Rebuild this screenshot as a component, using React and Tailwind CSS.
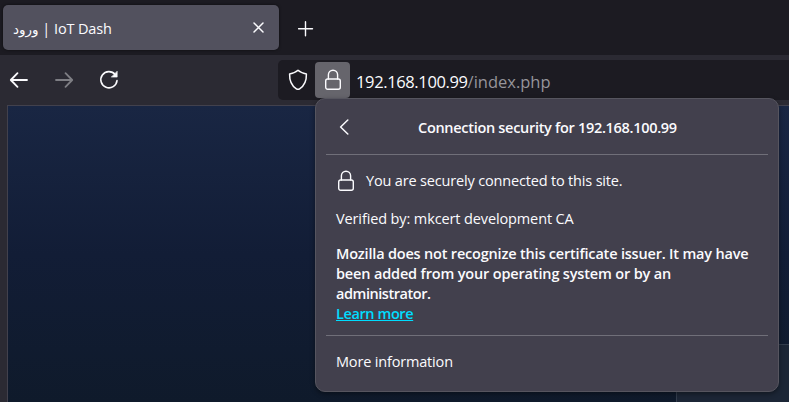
const stroke = {
  fill: 'none',
  stroke: 'currentColor',
  strokeLinecap: 'round',
  strokeLinejoin: 'round',
};

function Lock({ className }) {
  return (
    <svg className={className} width="18" height="22" viewBox="0 0 18 22" {...stroke} strokeWidth="1.4">
      <rect x="1.7" y="10" width="14.6" height="10.3" rx="2" />
      <path d="M4.4 10V5.8a4.6 4.6 0 0 1 9.2 0V10" />
    </svg>
  );
}

function Shield() {
  return (
    <svg width="20" height="22" viewBox="0 0 20 22" {...stroke} strokeWidth="1.5">
      <path d="M10 1.3C8 3.2 4.8 4.3 1.6 4.9c-.2 6 1.5 11.4 6.8 14.9.9.6 2.3.6 3.2 0 5.3-3.5 7-8.9 6.8-14.9C15.2 4.3 12 3.2 10 1.3Z" />
    </svg>
  );
}

function ArrowLeft({ className }) {
  return (
    <svg className={className} width="20" height="18" viewBox="0 0 20 18" {...stroke} strokeWidth="1.8">
      <path d="M18 9H2M8.5 2.2 1.8 9l6.7 6.8" />
    </svg>
  );
}

function Reload() {
  return (
    <svg width="20" height="20" viewBox="0 0 20 20" {...stroke} strokeWidth="1.6">
      <path d="M16.2 4.6A8.1 8.1 0 1 0 18 10.6" />
      <path d="M18.2 1.5v5.6h-5.6Z" fill="currentColor" strokeWidth=".6" />
    </svg>
  );
}

function TabStrip() {
  return (
    <div className="flex h-[55px] items-start bg-[#1c1b22] pl-[3px] pt-[5px]">
      <div className="flex h-[45px] w-[276px] items-center justify-between rounded-[5px] bg-[#52515e] pl-[10px] pr-[15px] shadow-[0_0_3px_rgba(0,0,0,0.6)]">
        <span className="whitespace-nowrap pt-[2px] text-[14.5px] tracking-[-0.15px]">
          <span className="text-[13.5px]">ورود</span>
          <span className="tracking-[-1.4px]"> | </span>IoT Dash
        </span>
        <svg width="11" height="11" viewBox="0 0 11 11" {...stroke} strokeWidth="1.5">
          <path d="m1 1 9 9M10 1l-9 9" />
        </svg>
      </div>
      <svg className="ml-[19px] mt-4" width="16" height="16" viewBox="0 0 16 16" {...stroke} strokeWidth="1.4">
        <path d="M7.5 .8v14M.5 7.8h14" />
      </svg>
    </div>
  );
}

function Toolbar() {
  return (
    <div className="flex h-[50px] bg-[#2b2a33] pt-[5px]">
      <div className="flex h-10 w-[278px] items-center pl-[9px]">
        <ArrowLeft />
        <ArrowLeft className="ml-[25px] rotate-180 text-[#7e7e84]" />
        <span className="ml-[25px]"><Reload /></span>
      </div>
      <div className="flex h-10 flex-1 items-center rounded-l-[5px] bg-[#1c1b22] pl-[10px]">
        <Shield />
        <div className="ml-[7px] flex h-9 w-[35px] items-center justify-center rounded-[4px] bg-[#66656c]">
          <Lock />
        </div>
        <span className="ml-[6px] whitespace-nowrap pt-[4px] text-[16.5px] tracking-[-0.37px]">
          192.168.100.99<span className="tracking-[0px] text-[#96959b]">/index.php</span>
        </span>
      </div>
    </div>
  );
}

function SecurityPanel() {
  return (
    <section className="absolute left-[315px] top-[98px] flex h-[294px] w-[464px] flex-col rounded-[10px] border border-[#56555f] bg-[#42404d] px-[10px] shadow-[0_2px_5px_rgba(0,0,0,0.4)]">
      <header className="flex h-[56px] shrink-0 items-center border-b border-[#706f79] pl-[13px]">
        <svg width="10" height="16" viewBox="0 0 10 16" {...stroke} strokeWidth="1.5">
          <path d="M8.8 1 1.6 8l7.2 7" />
        </svg>
        <h1 className="ml-[69px] whitespace-nowrap pt-[3px] text-[14.5px] font-semibold tracking-[-0.3px]">
          Connection security for 192.168.100.99
        </h1>
      </header>
      <div className="flex h-[181px] shrink-0 flex-col border-b border-[#706f79] px-[10px] text-[14.5px] leading-5">
        <div className="mt-[14px] flex h-6 items-center">
          <Lock className="ml-px" />
          <p className="ml-[11px] whitespace-nowrap tracking-[-0.17px]">You are securely connected to this site.</p>
        </div>
        <p className="mt-4 whitespace-nowrap tracking-[-0.12px]">Verified by: mkcert development CA</p>
        <p className="mt-[15px] whitespace-nowrap font-semibold tracking-[-0.19px]">
          Mozilla does not recognize this certificate issuer. It may have
          <br />
          <span className="tracking-[-0.16px]">been added from your operating system or by an</span>
          <br />
          <span className="tracking-[-0.45px]">administrator.</span>
          <br />
          <span className="tracking-[-0.4px] text-[#00ddff] underline">Learn more</span>
        </p>
      </div>
      <p className="mt-4 pl-[10px] text-[14.5px] leading-5 tracking-[-0.17px]">More information</p>
    </section>
  );
}

export default function App() {
  return (
    <div className="relative flex h-[402px] w-[789px] flex-col overflow-hidden bg-[#2b2a33] font-['Open_Sans','DejaVu_Sans',sans-serif] text-[#fbfbfe]">
      <TabStrip />
      <Toolbar />
      <main className="ml-[7px] flex flex-1 items-end justify-end border-l border-t border-[#42414d] bg-linear-to-b from-[#192643] via-[#121d36] to-[#0f1a2b]">
        <div className="h-[58px] w-[113px] border-l border-t border-[#333d4d] bg-[#1c2636]" />
      </main>
      <SecurityPanel />
    </div>
  );
}
